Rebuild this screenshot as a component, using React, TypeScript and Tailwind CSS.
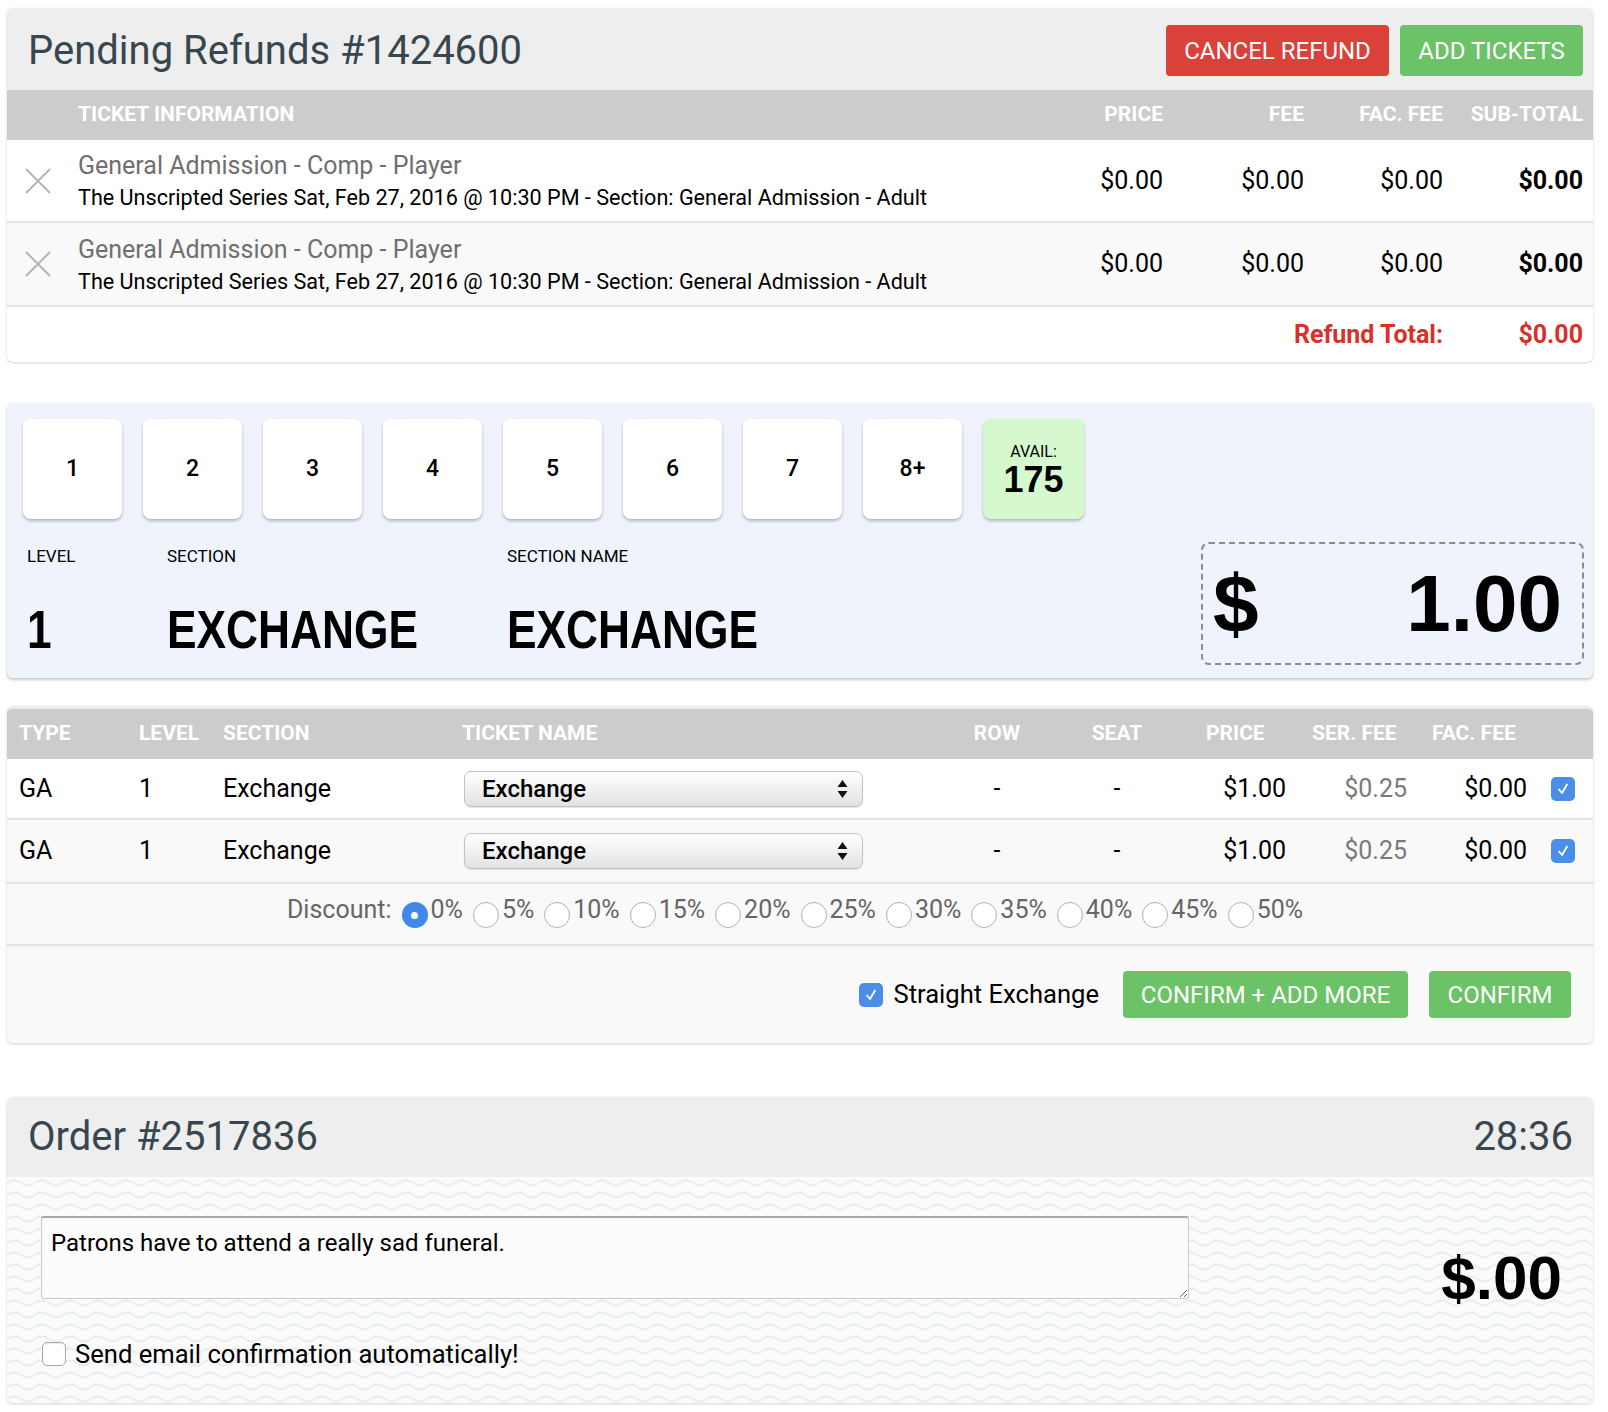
import React from 'react'

const bigFont = "font-['Liberation_Sans',Arial,sans-serif] font-bold"

function XIcon() {
  return (
    <svg width="26" height="26" viewBox="0 0 26 26" className="block">
      <path d="M1 1 L25 25 M25 1 L1 25" stroke="#b5b5b5" strokeWidth="2" fill="none" />
    </svg>
  )
}

function BlueCheck() {
  return (
    <div className="flex h-[24px] w-[24px] items-center justify-center rounded-[5px] bg-[#4a8ee8]">
      <svg width="14" height="14" viewBox="0 0 14 14">
        <path d="M3 7.5 L6 11 L11 2.5" stroke="#fff" strokeWidth="1.8" fill="none" strokeLinecap="round" strokeLinejoin="round" />
      </svg>
    </div>
  )
}

function EmptyCheck() {
  return <div className="h-[24px] w-[24px] rounded-[5px] border border-[#a9a9a9] bg-white shadow-[inset_0_1px_1px_rgba(0,0,0,0.08)]" />
}

function Radio({ on }: { on?: boolean }) {
  if (on) {
    return (
      <div className="flex h-[26px] w-[26px] items-center justify-center rounded-full bg-[#3f89e8]">
        <div className="h-[7px] w-[7px] rounded-full bg-white" />
      </div>
    )
  }
  return <div className="h-[26px] w-[26px] rounded-full border border-[#b3b3b3] bg-white" />
}

function FakeSelect() {
  return (
    <div className="flex h-[36px] w-[399px] items-center justify-between rounded-[7px] border border-[#c2c2c2] bg-gradient-to-b from-[#ffffff] via-[#f1f1f1] to-[#e2e2e2] pl-[17px] pr-[14px] shadow-[0_1px_1px_rgba(0,0,0,0.1)]">
      <span className="text-[24px] font-medium leading-none text-black">Exchange</span>
      <svg width="11" height="20" viewBox="0 0 11 20">
        <path d="M5.5 1 L10.5 8 L0.5 8 Z M0.5 12 L10.5 12 L5.5 19 Z" fill="#111" />
      </svg>
    </div>
  )
}

function RefundCard() {
  const rows = [0, 1]
  return (
    <div className="overflow-hidden rounded-[6px] bg-white shadow-[0_1px_3px_rgba(0,0,0,0.18)]">
      <div className="flex h-[82px] items-center justify-between bg-[#eeeeee] pl-[21px] pr-[10px]">
        <h1 className="mt-[4px] text-[40px] leading-none text-[#37474f]">Pending Refunds #1424600</h1>
        <div className="flex gap-[11px] pt-[3px]">
          <button className="h-[51px] w-[223px] rounded-[4px] bg-[#da4139] text-[24px] uppercase text-white">Cancel Refund</button>
          <button className="h-[51px] w-[183px] rounded-[4px] bg-[#6cc266] text-[24px] uppercase text-white">Add Tickets</button>
        </div>
      </div>
      <div className="grid h-[50px] grid-cols-[71px_1fr_141px_141px_139px_140px] items-center bg-[#cccccc] pr-[10px] text-[21px] font-bold uppercase text-white">
        <div />
        <div>Ticket Information</div>
        <div className="text-right">Price</div>
        <div className="text-right">Fee</div>
        <div className="text-right">Fac. Fee</div>
        <div className="text-right">Sub-Total</div>
      </div>
      {rows.map((i) => (
        <div
          key={i}
          className={`grid grid-cols-[71px_1fr_141px_141px_139px_140px] items-center border-b-2 border-[#e4e4e4] pr-[10px] ${i === 1 ? 'h-[84px] bg-[#f9f9f9]' : 'h-[83px] bg-white'}`}
        >
          <div className="pl-[18px]">
            <XIcon />
          </div>
          <div className="mt-[3px]">
            <div className="text-[25px] leading-[32px] text-[#6f6f6f]">General Admission - Comp - Player</div>
            <div className="text-[21.6px] leading-[32px] text-black">
              The Unscripted Series Sat, Feb 27, 2016 @ 10:30 PM - Section: General Admission - Adult
            </div>
          </div>
          <div className="text-right text-[25px] text-black">$0.00</div>
          <div className="text-right text-[25px] text-black">$0.00</div>
          <div className="text-right text-[25px] text-black">$0.00</div>
          <div className="text-right text-[25px] font-bold text-black">$0.00</div>
        </div>
      ))}
      <div className="grid h-[55px] grid-cols-[71px_1fr_141px_141px_139px_140px] items-center pr-[10px] text-[25px] font-bold text-[#d9302a]">
        <div className="col-span-5 text-right">Refund Total:</div>
        <div className="text-right">$0.00</div>
      </div>
    </div>
  )
}

function QuantityCard() {
  const qty = ['1', '2', '3', '4', '5', '6', '7', '8+']
  const big = `${bigFont} inline-block origin-left scale-x-[0.82] text-[54px] leading-[54px] text-black`
  return (
    <div className="mt-[41px] h-[275px] rounded-[6px] bg-[#eef3fc] pl-[16px] pr-[9px] pt-[16px] shadow-[0_2px_3px_rgba(0,0,0,0.22)]">
      <div className="flex gap-[21px]">
        {qty.map((q) => (
          <div
            key={q}
            className="flex h-[100px] w-[99px] items-center justify-center rounded-[8px] bg-white text-[23px] font-medium text-black shadow-[0_2px_3px_rgba(0,0,0,0.25)]"
          >
            {q}
          </div>
        ))}
        <div className="flex h-[100px] w-[101px] flex-col items-center rounded-[8px] bg-[#d5f8cf] pt-[24px] shadow-[0_2px_3px_rgba(0,0,0,0.25)]">
          <div className="text-[16px] leading-[18px] text-black">AVAIL:</div>
          <div className={`${bigFont} mt-[1px] text-[36px] leading-[36px] text-black`}>175</div>
        </div>
      </div>
      <div className="mt-[23px] flex items-start justify-between">
        <div className="ml-[4px] grid grid-cols-[140px_340px_auto]">
          <div className="mt-[4px] text-[17px] leading-[20px] text-black">LEVEL</div>
          <div className="mt-[4px] text-[17px] leading-[20px] text-black">SECTION</div>
          <div className="mt-[4px] text-[17px] leading-[20px] text-black">SECTION NAME</div>
          <div className="mt-[36px]">
            <span className={big}>1</span>
          </div>
          <div className="mt-[36px]">
            <span className={big}>EXCHANGE</span>
          </div>
          <div className="mt-[36px]">
            <span className={big}>EXCHANGE</span>
          </div>
        </div>
        <div className="flex h-[123px] w-[383px] items-center justify-between rounded-[8px] border-2 border-dashed border-[#8c8c8c] pl-[10px] pr-[20px]">
          <span className={`${bigFont} text-[82px] leading-none text-black`}>$</span>
          <span className={`${bigFont} text-[80px] leading-none text-black`}>1.00</span>
        </div>
      </div>
    </div>
  )
}

function ExchangeCard() {
  const cols = 'grid grid-cols-[125px_84px_239px_482px_120px_120px_120px_120px_120px_56px] items-center'
  const discounts = ['0%', '5%', '10%', '15%', '20%', '25%', '30%', '35%', '40%', '45%', '50%']
  return (
    <div className="mt-[28px] overflow-hidden rounded-[6px] border-t-[3px] border-[#ececec] bg-[#f9f9f9] shadow-[0_1px_3px_rgba(0,0,0,0.18)]">
      <div className={`${cols} h-[50px] bg-[#cccccc] text-[21px] font-bold uppercase text-white`}>
        <div className="pl-[12px]">Type</div>
        <div className="pl-[7px]">Level</div>
        <div className="pl-[7px]">Section</div>
        <div className="pl-[7px]">Ticket Name</div>
        <div className="text-center">Row</div>
        <div className="text-center">Seat</div>
        <div className="pl-[29px]">Price</div>
        <div className="pl-[15px]">Ser. Fee</div>
        <div className="pl-[15px]">Fac. Fee</div>
        <div />
      </div>
      {[0, 1].map((i) => (
        <div
          key={i}
          className={`${cols} border-b-2 border-[#e4e4e4] text-[25px] text-black ${i === 0 ? 'h-[61px] bg-white' : 'h-[64px] bg-[#f9f9f9]'}`}
        >
          <div className="pl-[12px]">GA</div>
          <div className="pl-[7px]">1</div>
          <div className="pl-[7px]">Exchange</div>
          <div className="pl-[9px]">
            <FakeSelect />
          </div>
          <div className="text-center">-</div>
          <div className="text-center">-</div>
          <div className="pr-[11px] text-right">$1.00</div>
          <div className="pr-[10px] text-right text-[#7a7a7a]">$0.25</div>
          <div className="pr-[10px] text-right">$0.00</div>
          <div className="pl-[14px]">
            <BlueCheck />
          </div>
        </div>
      ))}
      <div className="flex h-[62px] items-start justify-center border-b-2 border-[#e4e4e4] pt-[12px] text-[25px] leading-[28px] text-[#666666]">
        <span className="mr-[10px]">Discount:</span>
        {discounts.map((d, idx) => (
          <span key={d} className="mr-[10px] flex items-start">
            <span className="mt-[6px]">
              <Radio on={idx === 0} />
            </span>
            <span className="ml-[3px]">{d}</span>
          </span>
        ))}
      </div>
      <div className="flex h-[97px] items-center justify-end pr-[22px]">
        <BlueCheck />
        <span className="ml-[10px] text-[25.6px] text-black">Straight Exchange</span>
        <button className="ml-[24px] h-[47px] w-[285px] rounded-[4px] bg-[#6cc266] text-[24px] uppercase text-white">
          Confirm + Add More
        </button>
        <button className="ml-[21px] h-[47px] w-[142px] rounded-[4px] bg-[#6cc266] text-[24px] uppercase text-white">
          Confirm
        </button>
      </div>
    </div>
  )
}

function WaveBg() {
  return (
    <svg className="absolute inset-0 h-full w-full" aria-hidden="true">
      <defs>
        <pattern id="waves" width="28" height="12" patternUnits="userSpaceOnUse">
          <path d="M0 6 C4.7 2.5 9.3 2.5 14 6 S23.3 9.5 28 6" fill="none" stroke="#e9edf1" strokeWidth="2" />
        </pattern>
      </defs>
      <rect width="100%" height="100%" fill="url(#waves)" />
    </svg>
  )
}

function OrderCard() {
  return (
    <div className="mt-[54px] overflow-hidden rounded-[6px] bg-white shadow-[0_1px_3px_rgba(0,0,0,0.18)]">
      <div className="flex h-[80px] items-center justify-between bg-[#eeeeee] pl-[21px] pr-[20px]">
        <h2 className="text-[40px] leading-none text-[#37474f]">Order #2517836</h2>
        <span className="text-[40px] leading-none text-[#37474f]">28:36</span>
      </div>
      <div className="relative h-[226px] bg-[#fbfbfb]">
        <WaveBg />
        <div className="relative flex flex-col pl-[34px] pr-[31px] pt-[39px]">
          <div className="flex h-[83px] items-start justify-between">
            <textarea
              readOnly
              defaultValue="Patrons have to attend a really sad funeral."
              className="h-[83px] w-[1148px] resize rounded-[3px] border border-[#cacaca] border-t-2 border-t-[#a6a6a6] bg-[#fcfcfc] px-[9px] pt-[11px] text-[24px] leading-[28px] text-black outline-none"
            />
            <span className={`${bigFont} mt-[31px] text-[62px] leading-none text-black`}>$.00</span>
          </div>
          <div className="mt-[40px] flex h-[30px] items-center pl-[1px]">
            <EmptyCheck />
            <span className="ml-[9px] text-[25.6px] text-black">Send email confirmation automatically!</span>
          </div>
        </div>
      </div>
    </div>
  )
}

export default function App() {
  return (
    <div className="min-h-[1412px] bg-white pl-[7px] pt-[8px] font-['Roboto',sans-serif]">
      <div className="w-[1586px]">
        <RefundCard />
        <QuantityCard />
        <ExchangeCard />
        <OrderCard />
      </div>
    </div>
  )
}
